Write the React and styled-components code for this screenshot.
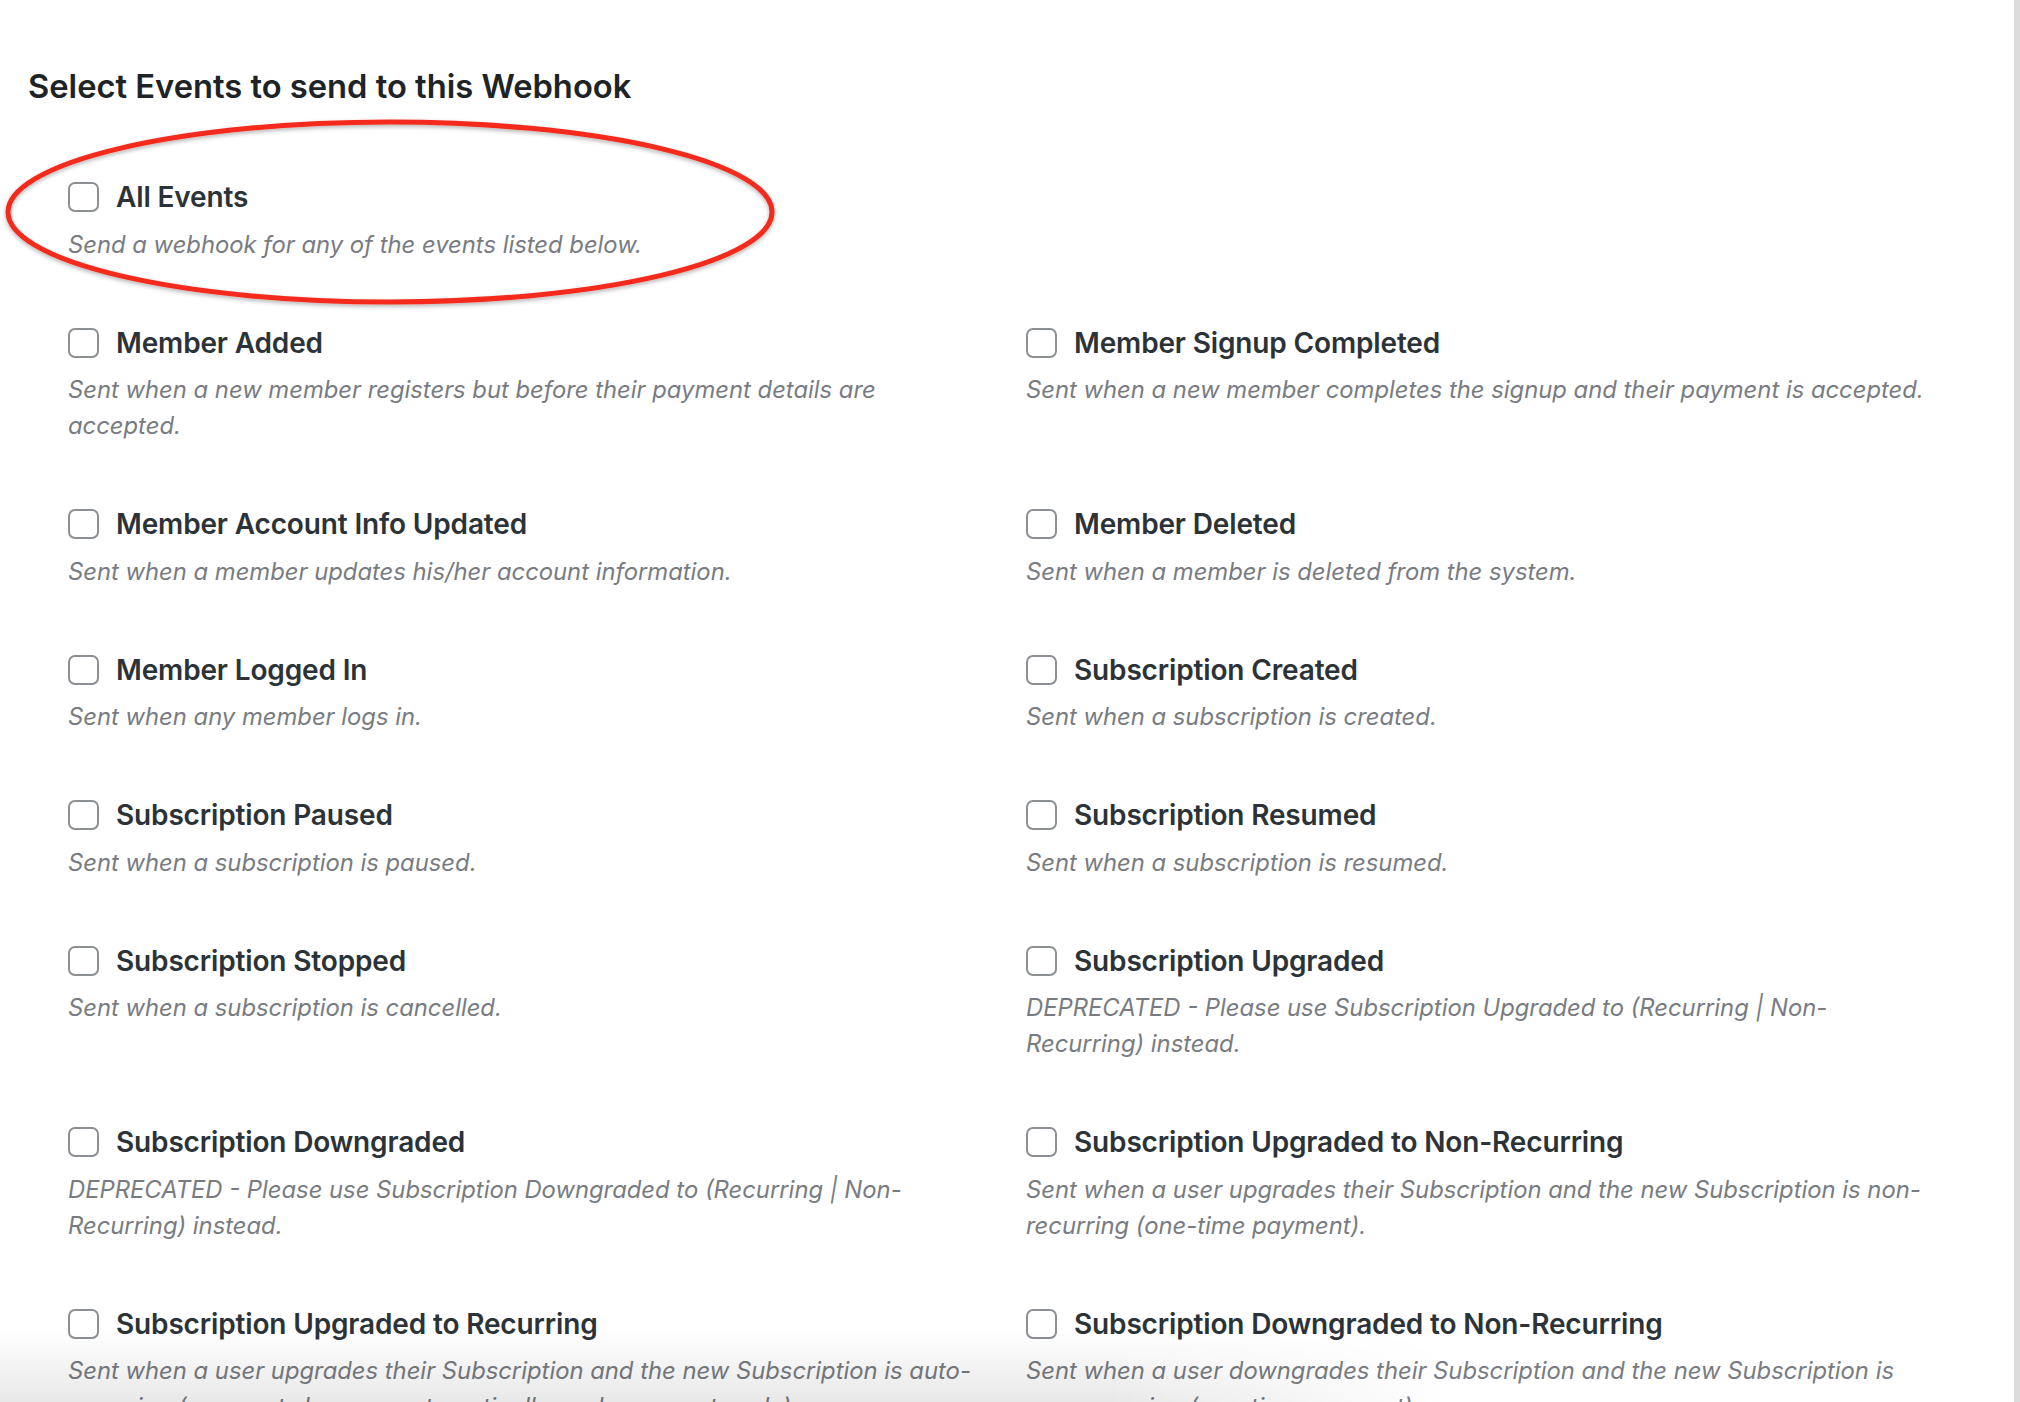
import React from 'react';
import styled, { createGlobalStyle } from 'styled-components';

const GlobalStyle = createGlobalStyle`
  html, body {
    margin: 0;
    padding: 0;
    background: #ffffff;
  }
  body {
    font-family: Inter, "Noto Sans", "Liberation Sans", sans-serif;
    -webkit-font-smoothing: antialiased;
  }
`;

const Page = styled.div`
  position: relative;
  display: flex;
  width: 2020px;
  height: 1402px;
  overflow: hidden;
  background: #ffffff;
`;

const Content = styled.main`
  flex: 1;
  padding: 66px 82px 0 28px;
`;

const ScrollTrack = styled.div`
  width: 6px;
  flex-shrink: 0;
  background: #dcdcdc;
`;

const Title = styled.h2`
  margin: 0;
  font-size: 32.7px;
  line-height: 40px;
  font-weight: 600;
  letter-spacing: 0;
  color: #1d2327;
`;

const AllEventsWrap = styled.div`
  margin-top: 71px;
  padding-left: 40px;
`;

const EventGrid = styled.div`
  display: grid;
  grid-template-columns: 1fr 1fr;
  column-gap: 52px;
  padding-left: 40px;
`;

const EventItem = styled.div`
  padding-bottom: 60px;
`;

const EventHeader = styled.label`
  display: flex;
  align-items: center;
  gap: 17px;
  height: 40px;
  cursor: pointer;
`;

const Checkbox = styled.span`
  box-sizing: border-box;
  width: 31px;
  height: 30px;
  flex-shrink: 0;
  border: 2px solid #8c8f94;
  border-radius: 7px;
  background: #ffffff;
`;

const EventLabel = styled.span`
  font-size: 28px;
  font-weight: 600;
  color: #2c3338;
  letter-spacing: -0.15px;
`;

const EventDesc = styled.p`
  margin: 9.5px 0 0;
  font-size: 23.8px;
  line-height: 36px;
  font-style: italic;
  color: #787c82;
`;

const Annotation = styled.svg`
  position: absolute;
  left: 0;
  top: 110px;
  pointer-events: none;
`;

const BottomShade = styled.div`
  position: absolute;
  left: 0;
  right: 6px;
  bottom: 0;
  height: 72px;
  pointer-events: none;
  background: linear-gradient(to bottom, rgba(0, 0, 0, 0), rgba(0, 0, 0, 0.09));
  -webkit-mask-image: linear-gradient(to right, #000 0%, #000 55%, transparent 72%);
  mask-image: linear-gradient(to right, #000 0%, #000 55%, transparent 72%);
`;

const events = [
  { label: 'Member Added', desc: 'Sent when a new member registers but before their payment details are accepted.' },
  { label: 'Member Signup Completed', desc: 'Sent when a new member completes the signup and their payment is accepted.' },
  { label: 'Member Account Info Updated', desc: 'Sent when a member updates his/her account information.' },
  { label: 'Member Deleted', desc: 'Sent when a member is deleted from the system.' },
  { label: 'Member Logged In', desc: 'Sent when any member logs in.' },
  { label: 'Subscription Created', desc: 'Sent when a subscription is created.' },
  { label: 'Subscription Paused', desc: 'Sent when a subscription is paused.' },
  { label: 'Subscription Resumed', desc: 'Sent when a subscription is resumed.' },
  { label: 'Subscription Stopped', desc: 'Sent when a subscription is cancelled.' },
  { label: 'Subscription Upgraded', desc: 'DEPRECATED - Please use Subscription Upgraded to (Recurring | Non-Recurring) instead.' },
  { label: 'Subscription Downgraded', desc: 'DEPRECATED - Please use Subscription Downgraded to (Recurring | Non-Recurring) instead.' },
  { label: 'Subscription Upgraded to Non-Recurring', desc: 'Sent when a user upgrades their Subscription and the new Subscription is non-recurring (one-time payment).' },
  { label: 'Subscription Upgraded to Recurring', desc: 'Sent when a user upgrades their Subscription and the new Subscription is auto-recurring (payments happen automatically each payment cycle).' },
  { label: 'Subscription Downgraded to Non-Recurring', desc: 'Sent when a user downgrades their Subscription and the new Subscription is non-recurring (one-time payment).' },
];

const Event = ({ label, desc }) => (
  <EventItem>
    <EventHeader>
      <Checkbox />
      <EventLabel>{label}</EventLabel>
    </EventHeader>
    <EventDesc>{desc}</EventDesc>
  </EventItem>
);

export default function App() {
  return (
    <Page>
      <GlobalStyle />
      <Content>
        <Title>Select Events to send to this Webhook</Title>
        <AllEventsWrap>
          <Event label="All Events" desc="Send a webhook for any of the events listed below." />
        </AllEventsWrap>
        <EventGrid>
          {events.map((ev) => (
            <Event key={ev.label} label={ev.label} desc={ev.desc} />
          ))}
        </EventGrid>
      </Content>
      <ScrollTrack />
      <Annotation width="790" height="210" viewBox="0 0 790 210">
        <defs>
          <filter id="ringShadow" x="-5%" y="-10%" width="110%" height="125%">
            <feDropShadow dx="0" dy="2" stdDeviation="2" floodColor="#000" floodOpacity="0.3" />
          </filter>
        </defs>
        <ellipse cx="390" cy="102" rx="382" ry="90" fill="none" stroke="#f42a1d" strokeWidth="5" filter="url(#ringShadow)" />
      </Annotation>
      <BottomShade />
    </Page>
  );
}
